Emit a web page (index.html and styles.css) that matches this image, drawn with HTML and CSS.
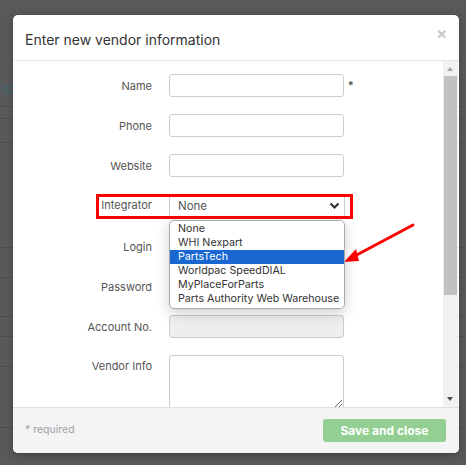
FILE: index.html
```html
<!DOCTYPE html>
<html>
<head>
<meta charset="utf-8">
<link rel="stylesheet" href="styles.css">
</head>
<body>
<div class="backdrop">
  <div class="bg-head">Op</div>
  <div class="bg-row r1"></div>
  <div class="bg-row r2"></div>
  <div class="bg-row r3"></div>
  <div class="bg-row r4"></div>
  <div class="bg-row r5"></div>
  <div class="bg-row r6"></div>
  <div class="bg-row r7"></div>
  <div class="bg-row r8"></div>
  <div class="bg-row r9"></div>
</div>

<div class="modal">
  <div class="modal-header">
    <h1 class="modal-title">Enter new vendor information</h1>
    <span class="close">×</span>
  </div>
  <div class="modal-body">
    <form class="form">
      <div class="row">
        <label class="lbl">Name</label>
        <input class="inp" type="text">
        <span class="req">*</span>
      </div>
      <div class="row">
        <label class="lbl">Phone</label>
        <input class="inp" type="text">
      </div>
      <div class="row">
        <label class="lbl">Website</label>
        <input class="inp" type="text">
      </div>
      <div class="row row-integrator">
        <label class="lbl lbl-top">Integrator</label>
        <div class="select">
          <span>None</span>
          <svg class="chev" width="11" height="8" viewBox="0 0 11 8"><path d="M1.5 1.5 L5.5 5.5 L9.5 1.5" fill="none" stroke="#333" stroke-width="2.2"/></svg>
        </div>
        <div class="hl-box"></div>
        <ul class="dropdown">
          <li>None</li>
          <li>WHI Nexpart</li>
          <li class="active">PartsTech</li>
          <li>Worldpac SpeedDIAL</li>
          <li>MyPlaceForParts</li>
          <li>Parts Authority Web Warehouse</li>
        </ul>
      </div>
      <div class="row">
        <label class="lbl">Login</label>
        <input class="inp" type="text">
      </div>
      <div class="row">
        <label class="lbl">Password</label>
        <input class="inp" type="password">
      </div>
      <div class="row">
        <label class="lbl">Account No.</label>
        <input class="inp inp-disabled" type="text" disabled>
      </div>
      <div class="row row-ta">
        <label class="lbl lbl-ta">Vendor Info</label>
        <textarea class="ta"></textarea>
      </div>
    </form>
    <div class="scrollbar">
      <div class="sb-arrow up"></div>
      <div class="sb-track"><div class="sb-thumb"></div></div>
      <div class="sb-arrow down"></div>
    </div>
  </div>
  <div class="modal-footer">
    <span class="required">* required</span>
    <button class="save" type="button">Save and close</button>
  </div>
</div>

<svg class="arrow" width="80" height="50" viewBox="0 0 80 50">
  <line x1="72" y1="5" x2="10" y2="38" stroke="#f00" stroke-width="3" stroke-linecap="round"/>
  <path d="M3 42 L15 29 L18 41 Z" fill="#f00"/>
</svg>
</body>
</html>
```

FILE: styles.css
```css
html, body {
  margin: 0;
  padding: 0;
}
body {
  width: 466px;
  height: 465px;
  background: #595959;
  font-family: "Inter", "Open Sans", sans-serif;
  position: relative;
  overflow: hidden;
}
.backdrop {
  position: relative;
  height: 465px;
}
.bg-head {
  position: absolute;
  left: -6px;
  top: 78px;
  font-size: 15px;
  color: #46636e;
}
.bg-row {
  position: absolute;
  left: 0;
  right: 0;
  height: 1px;
  background: #4d4d4d;
}
.r1 { top: 106px; }
.r2 { top: 118px; }
.r3 { top: 142px; }
.r4 { top: 247px; }
.r5 { top: 277px; }
.r6 { top: 316px; }
.r7 { top: 336px; }
.r8 { top: 366px; }
.r9 { top: 427px; }

.modal {
  position: absolute;
  left: 13px;
  top: 15px;
  width: 446px;
  height: 438px;
  background: #fff;
  border-radius: 5px;
  overflow: hidden;
  display: flex;
  flex-direction: column;
  box-shadow: 0 2px 6px rgba(0,0,0,0.3);
}
.modal-header {
  height: 46px;
  border-bottom: 1px solid #e5e5e5;
  display: flex;
  align-items: flex-start;
  justify-content: space-between;
  padding: 0 12px;
  box-sizing: border-box;
  flex: none;
}
.modal-title {
  margin: 16px 0 0;
  font-size: 14px;
  font-weight: 400;
  color: #333;
}
.close {
  margin-top: 8px;
  font-size: 16px;
  font-weight: 700;
  color: #c8c8c8;
}
.modal-body {
  flex: 1;
  display: flex;
  overflow: hidden;
}
.form {
  flex: 1;
  padding-top: 13px;
  display: flex;
  flex-direction: column;
  gap: 17px;
}
.row {
  display: grid;
  grid-template-columns: 139px 175px auto;
  column-gap: 17px;
  align-items: center;
  position: relative;
}
.row-integrator { height: 24px; align-items: start; }
.lbl {
  text-align: right;
  font-size: 11px;
  color: #555;
}
.lbl-top { padding-top: 4px; }
.inp {
  box-sizing: border-box;
  width: 175px;
  height: 23px;
  border: 1px solid #ccc;
  border-radius: 3px;
  margin: 0;
  padding: 0;
  background: #fff;
}
.inp-disabled { background: #eee; }
.req {
  font-size: 11px;
  color: #333;
  margin-left: -13px;
  margin-top: -2px;
}
.select {
  box-sizing: border-box;
  width: 176px;
  height: 24px;
  border-left: 1px solid #ccc;
  border-right: 1px solid #ccc;
  display: flex;
  align-items: center;
  justify-content: space-between;
  padding: 0 4px 0 8px;
  font-size: 11.5px;
  color: #555;
}
.chev { display: block; }
.hl-box {
  position: absolute;
  left: 83px;
  top: 0;
  width: 257px;
  height: 25px;
  border: 3px solid #f00;
  box-sizing: border-box;
}
.dropdown {
  position: absolute;
  left: 156px;
  top: 26px;
  width: 176px;
  box-sizing: border-box;
  margin: 0;
  padding: 1px 0 2px;
  list-style: none;
  background: #fff;
  border: 1px solid #aaa;
  border-radius: 5px;
  box-shadow: 0 4px 14px rgba(0,0,0,0.2);
  z-index: 5;
  font-size: 10.7px;
  color: #333;
}
.dropdown li {
  height: 14px;
  line-height: 14px;
  padding-left: 8px;
  white-space: nowrap;
}
.dropdown li.active {
  background: #1a67d2;
  color: #fff;
}
.ta {
  box-sizing: border-box;
  width: 175px;
  height: 54px;
  border: 1px solid #ccc;
  border-radius: 3px;
  margin: 0;
  resize: vertical;
}
.row-ta { align-items: start; }
.lbl-ta { padding-top: 4px; }

.scrollbar {
  width: 15px;
  margin-right: 1px;
  background: #f1f1f1;
  display: flex;
  flex-direction: column;
  flex: none;
}
.sb-arrow {
  height: 15px;
  position: relative;
  flex: none;
}
.sb-arrow.up::after, .sb-arrow.down::after {
  content: "";
  position: absolute;
  left: 4px;
  width: 0;
  height: 0;
  border-left: 3.5px solid transparent;
  border-right: 3.5px solid transparent;
}
.sb-arrow.up::after { top: 6px; border-bottom: 4px solid #a3a3a3; }
.sb-arrow.down::after { top: 5px; border-top: 4px solid #505050; }
.sb-track { flex: 1; padding: 0 1px; }
.sb-thumb {
  height: 219px;
  background: #c1c1c1;
}
.modal-footer {
  height: 46px;
  flex: none;
  box-sizing: border-box;
  border-top: 1px solid #e0e0e0;
  background: #f4f4f4;
  display: flex;
  align-items: center;
  justify-content: space-between;
  padding: 0 13px 0 12px;
}
.required {
  font-size: 10.5px;
  color: #a0a0a0;
  margin-top: -3px;
}
.save {
  width: 123px;
  height: 23px;
  border: 0;
  border-radius: 3px;
  background: #93cf93;
  color: #fff;
  font-family: inherit;
  font-weight: 700;
  font-size: 12px;
  padding: 0;
}
.arrow {
  position: absolute;
  left: 341px;
  top: 220px;
}
```
